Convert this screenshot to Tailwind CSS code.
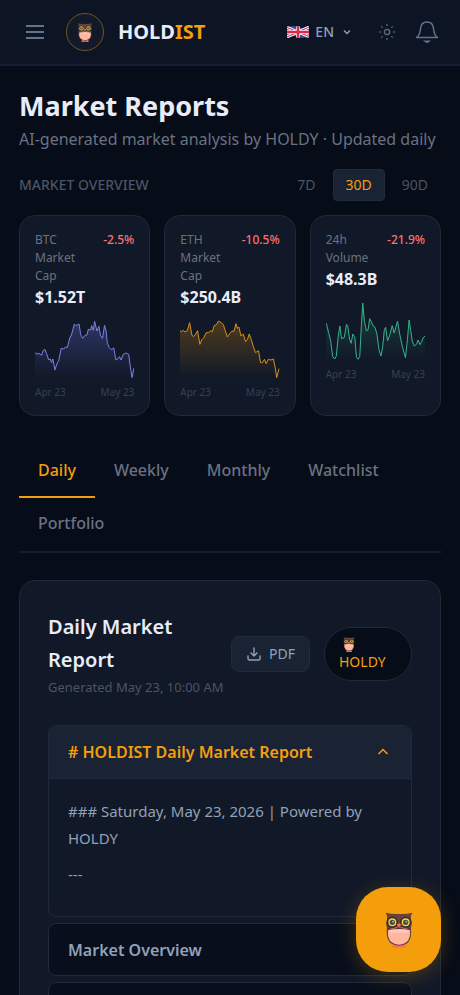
<!DOCTYPE html>
<html lang="en">
<head>
    <meta charset="UTF-8">
    <meta name="viewport" content="width=device-width, initial-scale=1.0">
    <script src="https://cdn.jsdelivr.net/npm/@tailwindcss/browser@4"></script>
    <title>Market Reports - HOLDIST</title>
    <style>
        body {
            font-family: 'Noto Sans', sans-serif;
        }
    </style>
</head>
<body class="bg-[#060c18] text-[#e8ecf8] min-h-screen overflow-x-hidden">
    <!-- Shared owl mascot -->
    <svg class="hidden" aria-hidden="true">
        <symbol id="owl" viewBox="0 0 82 108">
            <ellipse cx="31" cy="102" rx="11" ry="6" fill="#ff7358"/>
            <ellipse cx="52" cy="102" rx="11" ry="6" fill="#ff7358"/>
            <path d="M1 2Q18 7 41 6Q64 7 81 2Q75 10 77 22Q82 36 76 48Q82 76 67 93Q55 101 41 101Q27 101 15 93Q0 76 5 48Q0 36 5 22Q7 10 1 2Z" fill="#68433b"/>
            <path d="M9 50Q41 43 73 50Q78 76 64 90Q54 98 41 98Q28 98 18 90Q4 76 9 50Z" fill="#ffb7a0"/>
            <path d="M13 53Q41 46 69 53L67 63Q41 58 15 63Z" fill="#ffc9b7"/>
            <path d="M5 46Q24 54 41 45Q58 54 77 46L75 54Q41 48 7 54Z" fill="#5d2b3b"/>
            <circle cx="21" cy="31" r="17" fill="#3b2a28"/>
            <circle cx="61" cy="31" r="17" fill="#3b2a28"/>
            <circle cx="21" cy="31" r="12" fill="#f0d83f"/>
            <circle cx="61" cy="31" r="12" fill="#f0d83f"/>
            <circle cx="21" cy="31" r="8" fill="#4b4b42"/>
            <circle cx="61" cy="31" r="8" fill="#4b4b42"/>
            <circle cx="23" cy="29" r="3" fill="#a5a99f"/>
            <circle cx="63" cy="29" r="3" fill="#a5a99f"/>
            <path d="M34 37Q41 32 48 37L41 47Z" fill="#ff6c50"/>
        </symbol>
    </svg>

    <header class="flex items-center h-[66px] pl-[25px] pr-[21px] bg-[#0d1525] border-b-2 border-[#132033]">
        <button aria-label="Menu" class="text-slate-500">
            <svg class="w-5 h-5" viewBox="0 0 20 20" fill="none" stroke="currentColor" stroke-width="2"><path d="M1 4h18M1 10h18M1 16h18"/></svg>
        </button>
        <a href="#" class="flex items-center gap-[14px] ml-[21px]">
            <span class="flex items-center justify-center w-[38px] h-[38px] rounded-full border border-[#72541f] bg-[#121a2a]">
                <svg class="w-4 h-[19px]"><use href="#owl"/></svg>
            </span>
            <span class="text-xl font-bold">HOLD<span class="text-[#f59e0b]">IST</span></span>
        </a>
        <button aria-label="Language" class="ml-auto flex items-center text-sm font-medium text-slate-400">
            <svg class="w-[22px] h-3 mr-[6px]" viewBox="0 0 44 24">
                <path d="M0 3Q11-2 22 2T44 1V21Q33 26 22 22T0 23Z" fill="#3f4a9c"/>
                <path d="M0 3L44 21M44 2L0 22" stroke="#eef0f5" stroke-width="6"/>
                <path d="M0 3L44 21M44 2L0 22" stroke="#dc2845" stroke-width="2"/>
                <path d="M22 1V23M0 12H44" stroke="#eef0f5" stroke-width="8"/>
                <path d="M22 1V23M0 12H44" stroke="#dc2845" stroke-width="5"/>
            </svg>
            EN
            <svg class="w-[10px] h-[10px] ml-2" viewBox="0 0 10 10" fill="none" stroke="currentColor" stroke-width="1.4"><path d="M2 3.5L5 6.5L8 3.5"/></svg>
        </button>
        <button aria-label="Theme" class="ml-[26px] text-slate-500">
            <svg class="w-[18px] h-[18px]" viewBox="0 0 18 18" fill="none" stroke="currentColor" stroke-width="1.2">
                <circle cx="9" cy="9" r="2.7"/>
                <path d="M9 1v2M9 15v2M1 9h2M15 9h2M3.3 3.3l1.3 1.3M13.4 13.4l1.3 1.3M3.3 14.7l1.3-1.3M13.4 4.6l1.3-1.3"/>
            </svg>
        </button>
        <button aria-label="Notifications" class="ml-[19px] text-slate-500">
            <svg class="w-6 h-6" viewBox="0 0 24 24" fill="none" stroke="currentColor" stroke-width="1.5">
                <path d="M1.5 17.5H22.5C19 15.5 19 12 18.5 8.5C18 4 15.5 2 12 2S6 4 5.500 8.500C5 12 5 15.500 1.500 17.500Z" stroke-linejoin="round"/>
                <path d="M10 21.300Q12 23 14 21.300Z" fill="currentColor"/>
            </svg>
        </button>
    </header>

    <main class="px-[19px] pt-[23px]">
        <h1 class="text-[27px] leading-[34px] font-bold">Market Reports</h1>
        <p class="mt-1 text-base leading-6 text-gray-500">AI-generated market analysis by HOLDY · Updated daily</p>

        <div class="flex items-center justify-between mt-[18px]">
            <h2 class="text-sm font-medium text-gray-600">MARKET OVERVIEW</h2>
            <div class="flex gap-1 text-sm leading-5 text-gray-600">
                <button class="periodo px-3 py-[5px] border border-transparent rounded">7D</button>
                <button class="periodo px-3 py-[5px] border border-[#202c3d] rounded bg-[#1a2333] text-[#f59e0b]">30D</button>
                <button class="periodo px-3 py-[5px] border border-transparent rounded">90D</button>
            </div>
        </div>

        <section class="grid grid-cols-3 gap-[14px] mt-[14px]">
            <article class="p-[15px] bg-[#111827] border border-[#1f2937] rounded-2xl">
                <div class="flex justify-between items-start text-xs leading-[18px]">
                    <h3 class="w-12 text-gray-500">BTC Market Cap</h3>
                    <span class="font-medium text-[#f87171]">-2.5%</span>
                </div>
                <p class="text-base leading-6 font-bold">$1.52T</p>
                <svg class="w-full h-[60px] mt-[10px]" viewBox="0 0 300 180" preserveAspectRatio="none">
                    <defs><linearGradient id="fillBtc" x1="0" y1="0" x2="0" y2="1"><stop offset="0" stop-color="#6470db" stop-opacity=".34"/><stop offset="1" stop-color="#6470db" stop-opacity="0"/></linearGradient></defs>
                    <path fill="url(#fillBtc)" d="M0 101L5 105L12 103L20 109L25 94L30 91L35 104L41 122L46 120L50 131L54 120L60 153L66 135L72 124L79 88L87 90L92 84L98 85L105 57L110 48L119 15L124 20L133 15L138 47L144 58L151 49L157 48L161 31L168 33L171 20L176 34L180 7L187 36L193 22L198 50L204 58L210 19L215 36L218 70L224 86L230 92L238 87L244 122L250 120L255 113L260 123L266 107L274 102L283 106L287 137L293 176L299 147L300 180H0Z"/>
                    <path fill="none" stroke="#7c7fe8" stroke-width="3" stroke-linejoin="round" d="M0 101L5 105L12 103L20 109L25 94L30 91L35 104L41 122L46 120L50 131L54 120L60 153L66 135L72 124L79 88L87 90L92 84L98 85L105 57L110 48L119 15L124 20L133 15L138 47L144 58L151 49L157 48L161 31L168 33L171 20L176 34L180 7L187 36L193 22L198 50L204 58L210 19L215 36L218 70L224 86L230 92L238 87L244 122L250 120L255 113L260 123L266 107L274 102L283 106L287 137L293 176L299 147"/>
                </svg>
                <div class="flex justify-between mt-[5px] text-[10px] leading-4 text-gray-700"><span>Apr 23</span><span>May 23</span></div>
            </article>

            <article class="p-[15px] bg-[#111827] border border-[#1f2937] rounded-2xl">
                <div class="flex justify-between items-start text-xs leading-[18px]">
                    <h3 class="w-12 text-gray-500">ETH Market Cap</h3>
                    <span class="font-medium text-[#f87171]">-10.5%</span>
                </div>
                <p class="text-base leading-6 font-bold">$250.4B</p>
                <svg class="w-full h-[60px] mt-[10px]" viewBox="0 0 300 180" preserveAspectRatio="none">
                    <defs><linearGradient id="fillEth" x1="0" y1="0" x2="0" y2="1"><stop offset="0" stop-color="#f59e0b" stop-opacity=".26"/><stop offset="1" stop-color="#f59e0b" stop-opacity="0"/></linearGradient></defs>
                    <path fill="url(#fillEth)" d="M0 35L5 38L10 34L15 39L22 35L29 11L36 48L40 53L46 48L53 35L60 76L66 62L72 56L79 41L87 41L92 35L98 38L103 20L110 17L116 6L123 10L131 17L137 36L143 54L152 41L157 36L163 37L169 14L173 28L178 24L184 51L191 45L198 68L204 61L209 45L215 61L221 81L228 101L237 95L243 130L248 132L255 121L260 134L267 121L274 123L282 120L287 143L292 176L299 149L300 180H0Z"/>
                    <path fill="none" stroke="#d4901b" stroke-width="3" stroke-linejoin="round" d="M0 35L5 38L10 34L15 39L22 35L29 11L36 48L40 53L46 48L53 35L60 76L66 62L72 56L79 41L87 41L92 35L98 38L103 20L110 17L116 6L123 10L131 17L137 36L143 54L152 41L157 36L163 37L169 14L173 28L178 24L184 51L191 45L198 68L204 61L209 45L215 61L221 81L228 101L237 95L243 130L248 132L255 121L260 134L267 121L274 123L282 120L287 143L292 176L299 149"/>
                </svg>
                <div class="flex justify-between mt-[5px] text-[10px] leading-4 text-gray-700"><span>Apr 23</span><span>May 23</span></div>
            </article>

            <article class="p-[15px] bg-[#111827] border border-[#1f2937] rounded-2xl">
                <div class="flex justify-between items-start text-xs leading-[18px]">
                    <h3 class="w-12 text-gray-500">24h Volume</h3>
                    <span class="font-medium text-[#f87171]">-21.9%</span>
                </div>
                <p class="text-base leading-6 font-bold">$48.3B</p>
                <svg class="w-full h-[60px] mt-[10px]" viewBox="0 0 300 180" preserveAspectRatio="none">
                    <defs><linearGradient id="fillVol" x1="0" y1="0" x2="0" y2="1"><stop offset="0" stop-color="#34d399" stop-opacity=".22"/><stop offset="1" stop-color="#34d399" stop-opacity="0"/></linearGradient></defs>
                    <path fill="url(#fillVol)" d="M1 67L8 95L14 119L20 166L26 174L31 166L37 105L42 75L47 113L55 110L62 70L66 77L71 114L76 127L81 99L87 109L92 169L97 175L102 166L107 71L111 6L116 61L122 90L127 86L132 53L137 62L142 74L148 79L154 100L160 146L166 165L171 138L176 88L180 79L186 119L192 104L200 74L206 96L211 78L216 61L223 101L231 138L240 170L246 115L251 57L256 89L261 123L267 135L274 129L278 117L284 131L289 122L293 111L300 104V180H0Z"/>
                    <path fill="none" stroke="#35b38b" stroke-width="3" stroke-linejoin="round" d="M1 67L8 95L14 119L20 166L26 174L31 166L37 105L42 75L47 113L55 110L62 70L66 77L71 114L76 127L81 99L87 109L92 169L97 175L102 166L107 71L111 6L116 61L122 90L127 86L132 53L137 62L142 74L148 79L154 100L160 146L166 165L171 138L176 88L180 79L186 119L192 104L200 74L206 96L211 78L216 61L223 101L231 138L240 170L246 115L251 57L256 89L261 123L267 135L274 129L278 117L284 131L289 122L293 111L300 104"/>
                </svg>
                <div class="flex justify-between mt-[5px] text-[10px] leading-4 text-gray-700"><span>Apr 23</span><span>May 23</span></div>
            </article>
        </section>

        <nav class="flex flex-wrap mt-[29px] border-b-2 border-[#141e2c] text-base leading-[23px] font-medium text-gray-500">
            <button class="px-[19px] py-[14px] border-b-2 border-[#f59e0b] text-[#f59e0b]">Daily</button>
            <button class="px-[19px] py-[14px] border-b-2 border-transparent">Weekly</button>
            <button class="px-[19px] py-[14px] border-b-2 border-transparent">Monthly</button>
            <button class="px-[19px] py-[14px] border-b-2 border-transparent">Watchlist</button>
            <button class="px-[19px] py-[14px] border-b-2 border-transparent">Portfolio</button>
        </nav>

        <section class="mt-[27px] px-7 pt-[29px] pb-7 bg-[#111827] border border-[#1f2937] rounded-2xl">
            <div class="flex items-center justify-between mb-[27px]">
                <div class="shrink-0">
                    <h2 class="w-40 text-xl leading-[33px] font-semibold">Daily Market Report</h2>
                    <p class="text-[13px] leading-[22px] text-gray-600">Generated May 23, 10:00 AM</p>
                </div>
                <div class="flex shrink-0 items-center gap-[14px] text-sm">
                    <button class="flex items-center gap-[7px] h-9 px-[14px] rounded-lg border border-[#202c3d] bg-[#1a2333] text-slate-400">
                        <svg class="w-4 h-4" viewBox="0 0 16 16" fill="none" stroke="currentColor" stroke-width="1.400" stroke-linecap="round" stroke-linejoin="round"><path d="M2 10v2.500Q2 14 3.500 14h9Q14 14 14 12.500V10M8 2v8M5 7l3 3l3-3"/></svg>
                        PDF
                    </button>
                    <button class="w-[88px] h-[54px] px-[14px] rounded-full border border-[#1f2937] bg-[#060c18] text-left leading-[19px] text-[#f59e0b]">
                        <svg class="w-3 h-[15px] ml-1"><use href="#owl"/></svg>
                        HOLDY
                    </button>
                </div>
            </div>

            <div class="flex flex-col gap-[6px]">
                <div class="border border-[#1e293b] rounded-lg overflow-hidden">
                    <button onclick="alternarSecao(this)" aria-expanded="true" class="flex items-center justify-between w-full h-[53px] px-[19px] bg-[#1a2333] border-b border-[#1e2b3e] text-base font-semibold text-[#f59e0b]">
                        # HOLDIST Daily Market Report
                        <svg class="w-[18px] h-[18px]" viewBox="0 0 18 18" fill="none" stroke="currentColor" stroke-width="1.500"><path d="M4.500 11L9 6.500L13.500 11"/></svg>
                    </button>
                    <div class="px-[19px] pt-[19px] pb-7 text-[15px] leading-[27px] text-slate-400">
                        <p>### Saturday, May 23, 2026 | Powered by HOLDY</p>
                        <p class="mt-[9px]">---</p>
                    </div>
                </div>
                <div class="border border-[#1e293b] rounded-lg overflow-hidden bg-[#080e1b]">
                    <button class="flex items-center w-full h-[51px] px-[19px] text-base font-semibold text-slate-400">Market Overview</button>
                </div>
                <div class="border border-[#1e293b] rounded-lg overflow-hidden bg-[#080e1b]">
                    <button aria-label="Next section" class="w-full h-[51px]"></button>
                </div>
            </div>
        </section>
    </main>

    <button aria-label="Chat with HOLDY" class="fixed right-[19px] bottom-[23px] flex items-center justify-center w-[85px] h-[85px] rounded-[32px] bg-[#f59e0b] shadow-[0_4px_20px_rgba(245,158,11,0.25)]">
        <svg class="w-7 h-9"><use href="#owl"/></svg>
    </button>

    <script>
        function alternarSecao(botao) {
            const aberto = botao.getAttribute('aria-expanded') === 'true';
            botao.setAttribute('aria-expanded', !aberto);
            botao.nextElementSibling.classList.toggle('hidden');
        }

        // page is longer than the window, keep the scrollbar out of the layout
        document.documentElement.style.scrollbarWidth = 'none';
    </script>
</body>
</html>
